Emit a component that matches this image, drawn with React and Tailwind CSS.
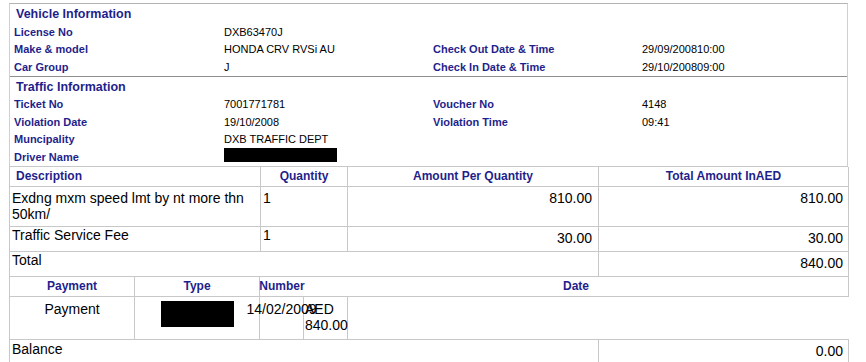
export default function App() {
  const navy = "text-[#1f1f8b]";

  const vehicleRows = [
    ["License No", "DXB63470J", "", ""],
    ["Make & model", "HONDA CRV RVSi AU", "Check Out Date & Time", "29/09/200810:00"],
    ["Car Group", "J", "Check In Date & Time", "29/10/200809:00"],
  ];

  const trafficRows = [
    ["Ticket No", "7001771781", "Voucher No", "4148"],
    ["Violation Date", "19/10/2008", "Violation Time", "09:41"],
    ["Muncipality", "DXB TRAFFIC DEPT", "", ""],
  ];

  return (
    <div className="w-[866px] h-[362px] overflow-hidden bg-white font-['Liberation_Sans',Arial,sans-serif] text-black">
      {/* info block */}
      <div className="ml-[9px] mt-[3px] w-[839px] border-t border-l border-r border-t-[#b4b4b4] border-l-[#d0d0d0] border-r-[#d0d0d0]">
        <div className={`h-[19px] flex items-center pl-[6px] pt-[2px] text-[12.5px] font-bold ${navy}`}>
          Vehicle Information
        </div>
        {vehicleRows.map((r) => (
          <div key={r[0]} className="grid grid-cols-[210px_209px_209px_1fr] pl-[4px] h-[17.67px] items-center text-[11px]">
            <span className={`font-bold ${navy}`}>{r[0]}</span>
            <span>{r[1]}</span>
            <span className={`font-bold ${navy}`}>{r[2]}</span>
            <span>{r[3]}</span>
          </div>
        ))}
        <div className="border-b border-[#8f8f8f]" />
        <div className={`h-[19px] flex items-center pl-[6px] pt-[2px] text-[12.5px] font-bold ${navy}`}>
          Traffic Information
        </div>
        {trafficRows.map((r) => (
          <div key={r[0]} className="grid grid-cols-[210px_209px_209px_1fr] pl-[4px] h-[17.5px] items-center text-[11px]">
            <span className={`font-bold ${navy}`}>{r[0]}</span>
            <span>{r[1]}</span>
            <span className={`font-bold ${navy}`}>{r[2]}</span>
            <span>{r[3]}</span>
          </div>
        ))}
        <div className="grid grid-cols-[210px_209px_209px_1fr] pl-[4px] h-[17.5px] text-[11px]">
          <span className={`font-bold ${navy} self-center`}>Driver Name</span>
          <span className="block w-[113px] h-[14px] bg-black" />
          <span />
          <span />
        </div>
      </div>

      {/* charges table */}
      <div className="ml-[9px] w-[839px] grid grid-cols-[251px_87px_251px_250px] border-t border-l border-[#c8c8c8] text-[14px] leading-[16px]">
        <div className={`h-[20px] flex items-center pl-[6px] border-r border-b border-[#c8c8c8] text-[12px] font-bold ${navy}`}>Description</div>
        <div className={`h-[20px] flex items-center justify-center border-r border-b border-[#c8c8c8] text-[12px] font-bold ${navy}`}>Quantity</div>
        <div className={`h-[20px] flex items-center justify-center border-r border-b border-[#c8c8c8] text-[12px] font-bold ${navy}`}>Amount Per Quantity</div>
        <div className={`h-[20px] flex items-center justify-center border-r border-b border-[#c8c8c8] text-[12px] font-bold ${navy}`}>Total Amount InAED</div>

        <div className="h-[40px] pl-[2px] pt-[3px] border-r border-b border-[#c8c8c8]">Exdng mxm speed lmt by nt more thn 50km/</div>
        <div className="h-[40px] pl-[2px] pt-[3px] border-r border-b border-[#c8c8c8]">1</div>
        <div className="h-[40px] pr-[6px] pt-[3px] text-right border-r border-b border-[#c8c8c8]">810.00</div>
        <div className="h-[40px] pr-[5px] pt-[3px] text-right border-r border-b border-[#c8c8c8]">810.00</div>

        <div className="h-[25px] pl-[2px] border-r border-b border-[#c8c8c8]">Traffic Service Fee</div>
        <div className="h-[25px] pl-[2px] border-r border-b border-[#c8c8c8]">1</div>
        <div className="h-[25px] pr-[6px] pt-[3px] text-right border-r border-b border-[#c8c8c8]">30.00</div>
        <div className="h-[25px] pr-[5px] pt-[3px] text-right border-r border-b border-[#c8c8c8]">30.00</div>

        <div className="col-span-3 h-[25px] pl-[2px] border-r border-b border-[#c8c8c8]">Total</div>
        <div className="h-[25px] pr-[5px] pt-[3px] text-right border-r border-b border-[#c8c8c8]">840.00</div>
      </div>

      {/* payments */}
      <div className="ml-[9px] w-[839px] grid grid-cols-[125px_125px_44px_545px] text-[14px] leading-[16px] border-l border-[#c8c8c8]">
        <div className={`h-[20px] flex items-center justify-center border-r border-b border-[#c8c8c8] text-[12px] font-bold ${navy}`}>Payment</div>
        <div className={`h-[20px] flex items-center justify-center border-r border-b border-[#c8c8c8] text-[12px] font-bold ${navy}`}>Type</div>
        <div className={`h-[20px] flex items-center justify-center whitespace-nowrap border-b border-[#c8c8c8] text-[12px] font-bold ${navy}`}>Number</div>
        <div className={`h-[20px] flex items-center justify-center border-r border-b border-[#c8c8c8] text-[12px] font-bold ${navy}`}>Date</div>

        <div className="h-[43px] pt-[4px] text-center border-r border-b border-[#c8c8c8]">Payment</div>
        <div className="h-[43px] pt-[4px] flex justify-center border-r border-b border-[#c8c8c8]">
          <span className="block w-[73px] h-[26px] bg-black" />
        </div>
        <div className="h-[43px] pt-[4px] flex justify-center whitespace-nowrap border-r border-b border-[#c8c8c8]">14/02/2009</div>
        <div className="h-[43px] flex">
          <div className="w-[44px] h-[43px] pt-[4px] pl-[1px] border-r border-b border-[#c8c8c8]">AED 840.00</div>
          <div className="flex-1 border-b border-[#c8c8c8]" />
        </div>
      </div>

      <div className="ml-[9px] w-[839px] grid grid-cols-[589px_250px] text-[14px] leading-[16px] border-l border-[#c8c8c8]">
        <div className="h-[24px] pl-[2px] pt-[1px] border-r border-[#c8c8c8]">Balance</div>
        <div className="h-[24px] pr-[5px] pt-[3px] text-right border-r border-[#c8c8c8]">0.00</div>
      </div>
    </div>
  );
}
